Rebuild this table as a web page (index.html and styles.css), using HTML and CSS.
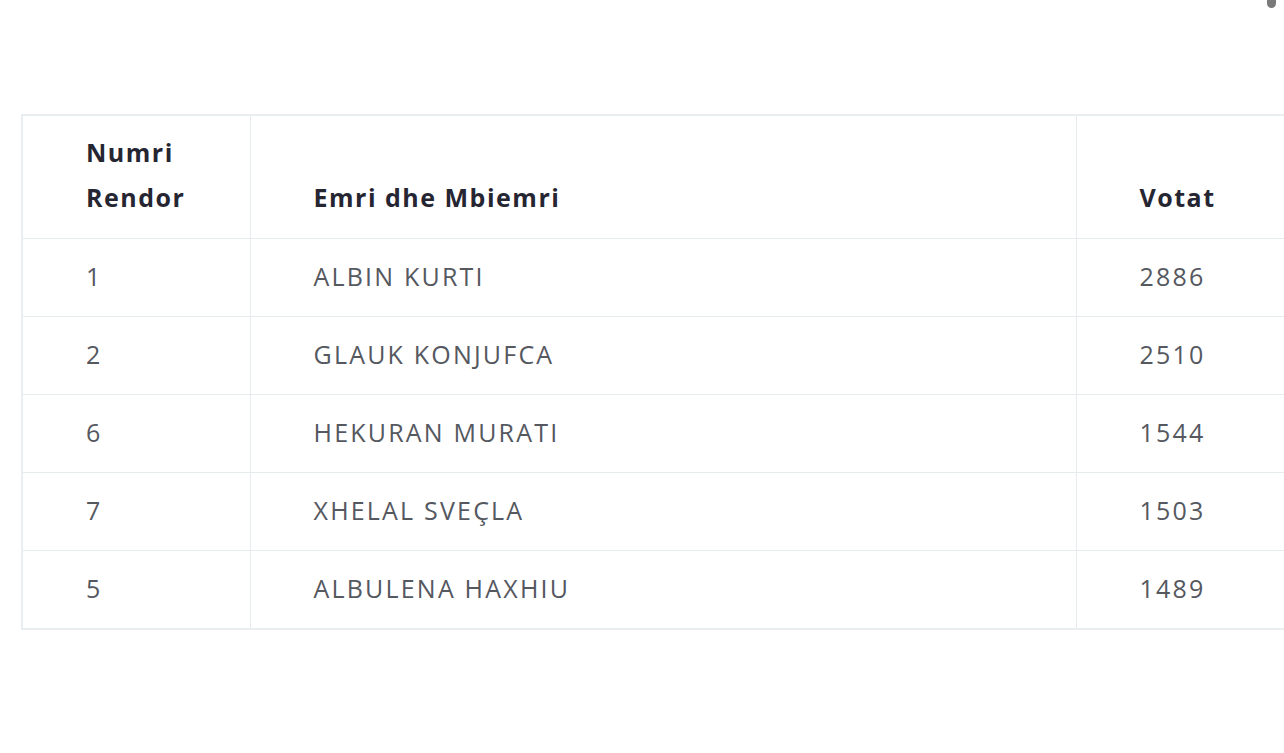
FILE: index.html
```html
<!DOCTYPE html>
<html>
<head>
<meta charset="utf-8">
<link rel="stylesheet" href="styles.css">
</head>
<body>
<div class="scroll-thumb"></div>
<main class="page">
  <table class="results">
    <colgroup>
      <col class="c-num">
      <col class="c-name">
      <col class="c-votes">
    </colgroup>
    <thead>
      <tr>
        <th>Numri<br>Rendor</th>
        <th>Emri dhe Mbiemri</th>
        <th>Votat</th>
      </tr>
    </thead>
    <tbody>
      <tr><td>1</td><td>ALBIN KURTI</td><td>2886</td></tr>
      <tr><td>2</td><td>GLAUK KONJUFCA</td><td>2510</td></tr>
      <tr><td>6</td><td>HEKURAN MURATI</td><td>1544</td></tr>
      <tr><td>7</td><td>XHELAL SVEÇLA</td><td>1503</td></tr>
      <tr><td>5</td><td>ALBULENA HAXHIU</td><td>1489</td></tr>
    </tbody>
  </table>
</main>
</body>
</html>
```

FILE: styles.css
```css
html, body {
  margin: 0;
  padding: 0;
  background: #ffffff;
  overflow: hidden;
  width: 1284px;
  height: 753px;
}
body {
  font-family: "Open Sans", "Liberation Sans", sans-serif;
  position: relative;
}
.page {
  padding: 114px 0 0 21px;
}
.results {
  border-collapse: collapse;
  table-layout: fixed;
  width: 1400px;
  border: 2px solid #e9eef1;
}
.c-num { width: 228px; }
.c-name { width: 826px; }
.c-votes { width: 346px; }
.results th,
.results td {
  border: 1px solid #e6ebee;
  padding: 16px 63px;
  line-height: 45px;
  text-align: left;
  font-size: 25px;
}
.results th {
  vertical-align: bottom;
  padding-top: 14px;
  padding-bottom: 18px;
  font-weight: 700;
  color: #262633;
  letter-spacing: 1.5px;
}
.results td {
  padding-top: 15px;
  padding-bottom: 17px;
  font-weight: 400;
  color: #55585f;
  letter-spacing: 2.2px;
}
.scroll-thumb {
  position: absolute;
  top: -6px;
  right: 8px;
  width: 9px;
  height: 14px;
  border-radius: 5px;
  background: #7a7a7a;
}
```
